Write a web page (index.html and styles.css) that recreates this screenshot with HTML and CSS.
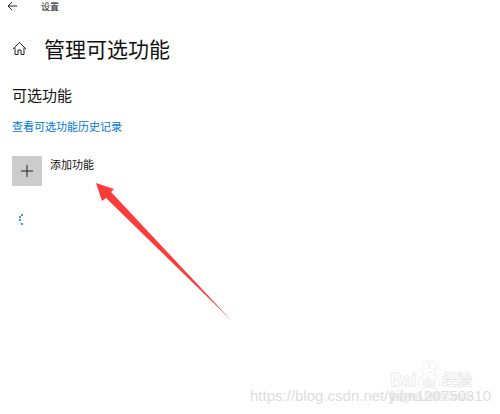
FILE: index.html
```
<!DOCTYPE html>
<html lang="zh-CN">
<head>
    <meta charset="UTF-8">
    <title>设置</title>
    <link rel="stylesheet" href="styles.css">
</head>
<body>
    <!-- Title bar -->
    <header class="titlebar">
        <button class="back-btn" aria-label="返回">
            <svg width="10" height="10" viewBox="0 0 10 10"><path d="M10 5H1M5 1L1 5L5 9"/></svg>
        </button>
        <span>设置</span>
    </header>

    <!-- Page content -->
    <main class="container">
        <div class="heading">
            <a class="home" href="#" aria-label="主页">
                <svg width="15" height="15" viewBox="0 0 15 15"><path d="M1 8L7.500 1.500L14 8M3 6.500V13.500H6V9H9V13.500H12V6.500"/></svg>
            </a>
            <h1>管理可选功能</h1>
        </div>
        <h2>可选功能</h2>
        <a class="history" href="#">查看可选功能历史记录</a>
        <button class="add-btn">
            <span class="plus">
                <svg width="12" height="12" viewBox="0 0 12 12"><path d="M6 0V12M0 6H12"/></svg>
            </span>
            <span>添加功能</span>
        </button>
        <svg class="loading" width="14" height="14" viewBox="0 0 14 14">
            <circle cx="10" cy="2" r="1"/>
            <circle cx="8" cy="4" r="1"/>
            <circle cx="8" cy="7" r="1"/>
            <circle cx="10" cy="11" r="1"/>
        </svg>
    </main>

    <!-- Arrow pointing at the add button -->
    <svg class="arrow" width="136" height="138" viewBox="0 0 136 138">
        <path d="M0 0L18 6L15 9L135 137L10 15L6 18Z"/>
    </svg>

    <!-- Watermarks -->
    <div class="baidu">
        <span>Bai</span>
        <svg width="24" height="30" viewBox="0 0 24 30">
            <ellipse cx="3" cy="13" rx="3" ry="4"/>
            <ellipse cx="9" cy="5" rx="3" ry="4"/>
            <ellipse cx="16" cy="5" rx="3" ry="4"/>
            <ellipse cx="21" cy="12" rx="3" ry="4"/>
            <path d="M12 12C8 12 7 17 4 19C0 23 2 29 7 28C10 27 14 27 17 28C23 29 24 23 20 19C17 16 16 12 12 12Z"/>
            <text x="6" y="26">du</text>
        </svg>
        <span>经验</span>
        <small>jingyan.baidu.com</small>
    </div>
    <div class="blog-url">https://blog.csdn.net/yifm120750310</div>
</body>
</html>
```
FILE: styles.css
```
body {
    margin: 0;
    min-height: 100vh;
    position: relative;
    background-color: #fff;
    color: #111;
    font-family: "Noto Sans CJK SC", sans-serif;
    font-size: 11px;
}

button {
    padding: 0;
    border: none;
    background: none;
    color: inherit;
    font: inherit;
    cursor: pointer;
}

a {
    color: #0078d7;
    text-decoration: none;
}

svg {
    display: block;
    fill: none;
    stroke: #222;
}

.titlebar {
    display: flex;
    align-items: center;
    gap: 24px;
    height: 12px;
    padding-left: 7px;
    font-size: 9px;
}

.container {
    display: flex;
    flex-direction: column;
    align-items: flex-start;
    padding: 20px 12px;
}

.heading {
    display: flex;
    align-items: center;
    gap: 17px;
}

h1 {
    margin: 0;
    font-size: 21px;
    font-weight: 400;
    line-height: 32px;
}

h2 {
    margin: 20px 0 12px;
    font-size: 15px;
    font-weight: 400;
    line-height: 22px;
}

.history {
    line-height: 16px;
}

.add-btn {
    display: flex;
    gap: 8px;
    margin-top: 22px;
    line-height: 16px;
}

.plus {
    display: flex;
    align-items: center;
    justify-content: center;
    width: 30px;
    height: 30px;
    background-color: #ccc;
}

.loading {
    margin-top: 27px;
    fill: #0078d7;
    stroke: none;
}

/* arrow drawn over the page */
.arrow {
    position: absolute;
    top: 183px;
    left: 96px;
    fill: #fc3b3b;
    stroke: none;
}

/* watermarks */
.baidu {
    position: absolute;
    right: 28px;
    bottom: 10px;
    display: grid;
    grid-template-columns: auto auto auto;
    align-items: end;
    column-gap: 1px;
    color: #fff;
    font-family: "Liberation Sans", "Noto Sans CJK SC", sans-serif;
    font-size: 18px;
    line-height: 20px;
    -webkit-text-stroke: 1px #ddd;
    paint-order: stroke fill;
}

.baidu svg {
    fill: #fff;
    stroke: #ddd;
}

.baidu text {
    fill: #fff;
    font-size: 11px;
}

.baidu span:last-of-type {
    font-size: 15px;
}

.baidu small {
    grid-column: 1 / 4;
    font-size: 10px;
    line-height: 14px;
}

.blog-url {
    position: absolute;
    right: 9px;
    bottom: 8px;
    color: #ddd;
    font-family: "Liberation Sans", sans-serif;
    font-size: 15px;
    line-height: 20px;
}
```
